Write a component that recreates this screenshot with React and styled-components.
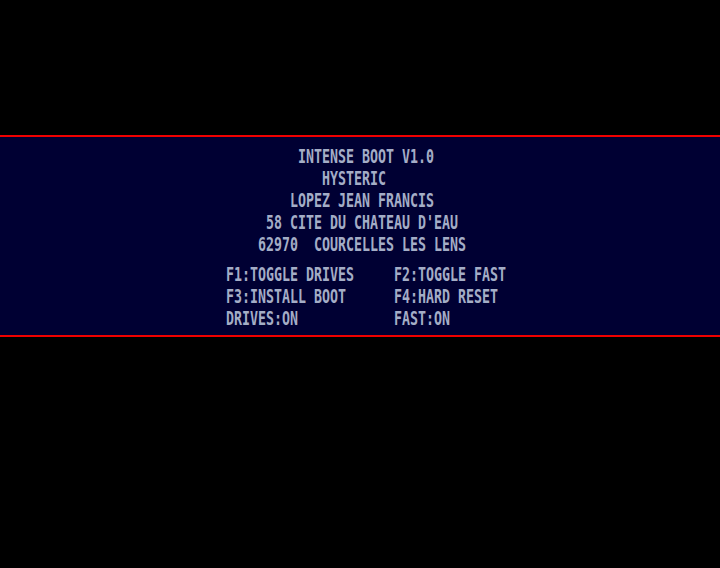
import React from "react";
import styled, { createGlobalStyle } from "styled-components";

const Global = createGlobalStyle`
  html, body { margin: 0; padding: 0; background: #000; }
  body { width: 720px; height: 568px; overflow: hidden; }
`;

const Screen = styled.div`
  width: 720px;
  height: 568px;
  background: #000;
  padding-top: 135px;
  box-sizing: border-box;
`;

const Band = styled.div`
  background: #000033;
  border-top: 2px solid #f00000;
  border-bottom: 2px solid #f00000;
  padding: 10px 0 4px 226px;
`;

const Block = styled.div``;

const Grid = styled.div`
  display: grid;
  grid-template-columns: 168px auto;
  margin-top: 8px;
`;

const Line = styled.div`
  height: 22px;
  overflow: visible;
`;

const Glyphs = styled.span`
  display: block;
  font-family: "DejaVu Sans Mono", "Liberation Mono", monospace;
  font-weight: bold;
  font-size: 13.29px;
  line-height: 13.29px;
  color: #a4adc6;
  white-space: pre;
  transform: scaleY(1.44);
  transform-origin: 0 0;
`;

const header = [
  "         INTENSE BOOT V1.0",
  "            HYSTERIC",
  "        LOPEZ JEAN FRANCIS",
  "     58 CITE DU CHATEAU D'EAU",
  "    62970  COURCELLES LES LENS",
];

const keys = [
  ["F1:TOGGLE DRIVES", "F2:TOGGLE FAST"],
  ["F3:INSTALL BOOT", "F4:HARD RESET"],
  ["DRIVES:ON", "FAST:ON"],
];

export default function App() {
  return (
    <>
      <Global />
      <Screen>
        <Band>
          <Block>
            {header.map((t, i) => (
              <Line key={i}>
                <Glyphs>{t}</Glyphs>
              </Line>
            ))}
          </Block>
          <Grid>
            {keys.flat().map((t, i) => (
              <Line key={i}>
                <Glyphs>{t}</Glyphs>
              </Line>
            ))}
          </Grid>
        </Band>
      </Screen>
    </>
  );
}
